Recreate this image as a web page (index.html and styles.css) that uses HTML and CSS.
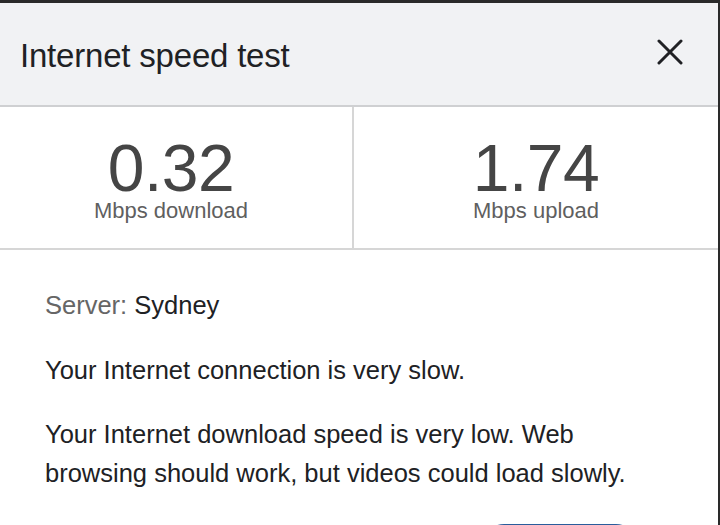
FILE: index.html
```html
<!DOCTYPE html>
<html lang="en">
<head>
    <meta charset="UTF-8">
    <meta name="viewport" content="width=device-width, initial-scale=1.0">
    <title>Internet speed test</title>
    <link rel="stylesheet" href="styles.css">
</head>
<body>
    <div class="dialog">
        <div class="header">
            <h1>Internet speed test</h1>
            <button class="close" aria-label="Close">
                <svg width="26" height="26" viewBox="0 0 26 26">
                    <path d="M2 2 L24 24 M24 2 L2 24" stroke="#202124" stroke-width="3" stroke-linecap="round"/>
                </svg>
            </button>
        </div>

        <div class="stats">
            <div class="stat stat-left">
                <div class="value">0.32</div>
                <div class="unit">Mbps download</div>
            </div>
            <div class="stat stat-right">
                <div class="value">1.74</div>
                <div class="unit">Mbps upload</div>
            </div>
        </div>

        <div class="details">
            <p><span class="muted">Server:</span> Sydney</p>
            <p>Your Internet connection is very slow.</p>
            <p>Your Internet download speed is very low. Web browsing should work, but videos could load slowly.</p>
            <div class="actions">
                <!-- only the top edge of this button is visible -->
                <button class="retest" aria-label="Test again"></button>
            </div>
        </div>
    </div>
</body>
</html>
```

FILE: styles.css
```css
* {
    margin: 0;
    padding: 0;
    box-sizing: border-box;
}
body {
    font-family: "Liberation Sans", Arial, sans-serif;
    background-color: #fff;
    height: 525px;
    overflow: hidden;
}
.dialog {
    border-top: 3px solid #2a2a2a;
    border-right: 2px solid #2a2a2a;
    height: 525px;
    overflow: hidden;
}
.header {
    background-color: #f1f2f4;
    height: 104px;
    display: flex;
    align-items: center;
    justify-content: space-between;
    padding: 0 35px 0 20px;
    border-bottom: 2px solid #cfd0d2;
}
.header h1 {
    font-size: 33px;
    font-weight: normal;
    color: #202124;
    letter-spacing: -0.2px;
    margin-top: 4px;
}
.close {
    background: none;
    border: none;
    width: 26px;
    height: 26px;
    margin-top: -4px;
    cursor: pointer;
}
.close svg {
    display: block;
}
.stats {
    display: grid;
    grid-template-columns: 354px 1fr;
    height: 143px;
    border-bottom: 2px solid #d6d6d6;
}
.stat {
    text-align: center;
    padding-top: 31px;
}
.stat-left {
    border-right: 2px solid #d6d6d6;
    padding-right: 10px;
}
.value {
    font-size: 66px;
    line-height: 60px;
    color: #454545;
    letter-spacing: -0.5px;
}
.unit {
    font-size: 22px;
    line-height: 24px;
    color: #5f5f5f;
    margin-top: 1px;
}
.details {
    padding: 36px 45px 0 45px;
    color: #202124;
    font-size: 25.5px;
    line-height: 39px;
}
.details p {
    margin-bottom: 25.5px;
}
.muted {
    color: #666;
}
.actions {
    display: flex;
    justify-content: flex-end;
    padding-right: 35px;
}
.retest {
    width: 156px;
    height: 44px;
    margin-top: 5px;
    border: none;
    border-radius: 22px;
    background-color: #2a5d9c;
    cursor: pointer;
}
```
